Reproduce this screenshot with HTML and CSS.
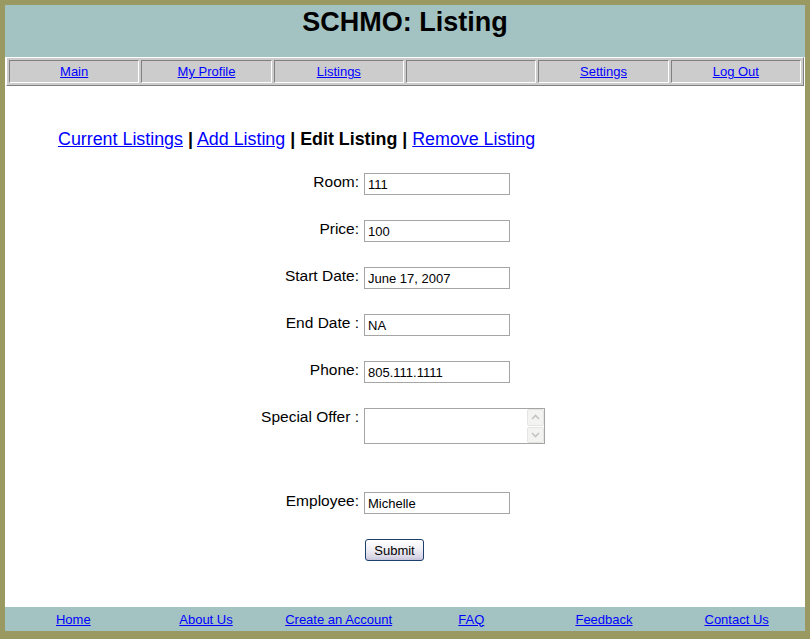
FILE: index.html
```html
<!DOCTYPE html>
<html>
<head>
<meta charset="utf-8">
<title>SCHMO: Listing</title>
<link rel="stylesheet" href="styles.css">
</head>
<body>
<div class="page">
  <header class="masthead">
    <h1 class="title">SCHMO: Listing</h1>
  </header>
  <nav class="navwrap">
    <table class="nav">
      <tr>
        <td><a href="#">Main</a></td>
        <td><a href="#">My Profile</a></td>
        <td><a href="#">Listings</a></td>
        <td></td>
        <td><a href="#">Settings</a></td>
        <td><a href="#">Log Out</a></td>
      </tr>
    </table>
  </nav>
  <main class="content">
    <p class="subnav"><a href="#">Current Listings</a> <b>|</b> <a href="#">Add Listing</a> <b>| Edit Listing |</b> <a href="#">Remove Listing</a></p>
    <form class="form">
      <label class="lbl">Room:</label><input class="field" type="text" value="111">
      <label class="lbl">Price:</label><input class="field" type="text" value="100">
      <label class="lbl">Start Date:</label><input class="field" type="text" value="June 17, 2007">
      <label class="lbl">End Date :</label><input class="field" type="text" value="NA">
      <label class="lbl">Phone:</label><input class="field" type="text" value="805.111.1111">
      <label class="lbl">Special Offer :</label>
      <div class="offer">
        <textarea class="offer-text"></textarea>
        <div class="sb">
          <span class="sb-btn"><svg width="9" height="6" viewBox="0 0 9 6"><path d="M1 5 L4.5 1.5 L8 5" fill="none" stroke="#c4c4c4" stroke-width="1.6"/></svg></span>
          <span class="sb-btn"><svg width="9" height="6" viewBox="0 0 9 6"><path d="M1 1 L4.5 4.5 L8 1" fill="none" stroke="#c4c4c4" stroke-width="1.6"/></svg></span>
        </div>
      </div>
      <label class="lbl wide">Employee:</label><input class="field wide" type="text" value="Michelle">
      <span></span><button class="submit" type="button">Submit</button>
    </form>
  </main>
  <footer class="foot">
    <a href="#">Home</a>
    <a href="#">About Us</a>
    <a href="#">Create an Account</a>
    <a href="#">FAQ</a>
    <a href="#">Feedback</a>
    <a href="#">Contact Us</a>
  </footer>
</div>
</body>
</html>
```
FILE: styles.css
```css
html, body {
  margin: 0;
  padding: 0;
}
body {
  background: #9a9962;
  font-family: "Liberation Sans", Arial, sans-serif;
  color: #000;
}
a {
  color: #0000ff;
  text-decoration: underline;
}
.page {
  width: 800px;
  margin: 5px 5px 0 5px;
  background: #fff;
}
.masthead {
  height: 52px;
  box-sizing: border-box;
  padding-top: 2px;
  background: #a3c2c2;
  text-align: center;
}
.title {
  margin: 0;
  font-size: 27px;
  font-weight: bold;
  line-height: 30px;
}
.navwrap {
  padding: 0 1px;
  background: #fff;
}
.nav {
  width: 798px;
  table-layout: fixed;
  border-collapse: separate;
  border-spacing: 2px;
  background: #cccccc;
  border: 1px solid;
  border-color: #ffffff #808080 #808080 #ffffff;
}
.nav td {
  height: 21px;
  padding: 0;
  text-align: center;
  font-size: 13px;
  background: #cccccc;
  border: 1px solid;
  border-color: #808080 #ffffff #ffffff #808080;
}
.content {
  height: 521px;
  box-sizing: border-box;
  padding-top: 43px;
}
.subnav {
  margin: 0;
  padding-left: 53px;
  font-size: 17.85px;
  line-height: 21px;
}
.form {
  margin-top: 23px;
  display: grid;
  grid-template-columns: 354px auto;
  column-gap: 5px;
  row-gap: 25px;
  justify-items: start;
  align-items: start;
}
.lbl {
  justify-self: end;
  font-size: 15.5px;
  line-height: 18px;
  margin-top: 0;
}
.field {
  width: 146px;
  height: 22px;
  box-sizing: border-box;
  margin: 0;
  padding: 1px 3px 0;
  border: 1px solid #a5a5a5;
  font-family: "Liberation Sans", Arial, sans-serif;
  font-size: 13px;
  color: #000;
  background: #fff;
}
.lbl.wide {
  margin-top: 23px;
}
.field.wide {
  margin-top: 23px;
}
.offer {
  width: 181px;
  height: 36px;
  box-sizing: border-box;
  border: 1px solid #a5a5a5;
  display: flex;
  background: #fff;
}
.offer-text {
  flex: 1;
  border: 0;
  margin: 0;
  padding: 2px;
  resize: none;
  outline: none;
  font-family: "Liberation Sans", Arial, sans-serif;
  font-size: 13px;
}
.sb {
  width: 17px;
  display: flex;
  flex-direction: column;
  gap: 1px;
}
.sb-btn {
  flex: 1;
  display: flex;
  align-items: center;
  justify-content: center;
  background: #f3f3f1;
  border: 1px solid #e4e4e2;
  border-radius: 2px;
}
.submit {
  width: 59px;
  height: 22px;
  margin: 0 0 0 1px;
  padding: 0;
  border: 1px solid #1d3f6b;
  border-radius: 3px;
  background: linear-gradient(#ffffff 0%, #f1f0f5 45%, #d9d6e6 85%, #c6c2da 100%);
  font-family: "Liberation Sans", Arial, sans-serif;
  font-size: 13px;
  color: #000;
}
.foot {
  height: 24px;
  background: #a3c2c2;
  display: grid;
  grid-template-columns: repeat(6, 1fr);
  padding: 0 2px;
  align-items: center;
  justify-items: center;
  font-size: 13px;
}
```
